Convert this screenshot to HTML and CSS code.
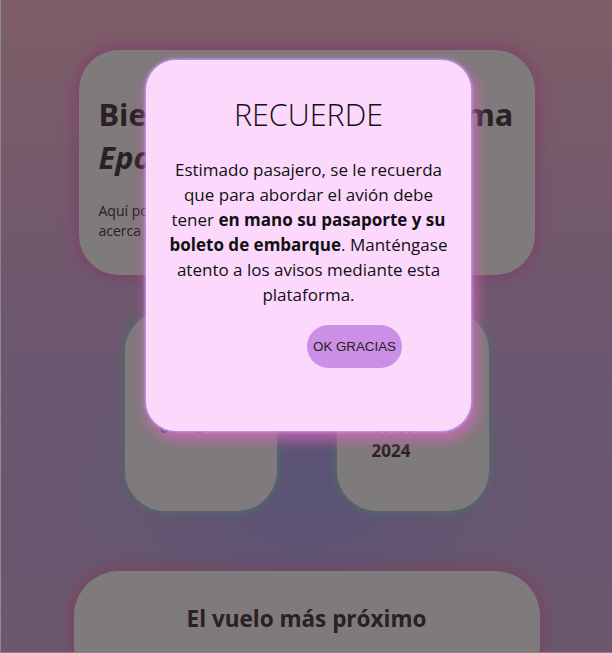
FILE: index.html
```html
<!DOCTYPE html>
<html lang="es">
<head>
<meta charset="utf-8">
<title>Epocha</title>
<link rel="stylesheet" href="styles.css">
</head>
<body>
<div class="page">
  <main class="content">
    <section class="card hero">
      <h1>Bienvenido a la plataforma<br><em>Epocha</em></h1>
      <p>Aquí podrás revisar la información<br>acerca de tus vuelos.</p>
    </section>
    <div class="stats">
      <div class="mini">
        <span class="label">Hora</span>
        <span class="val">06:12</span>
      </div>
      <div class="mini">
        <span class="label">Fecha</span>
        <span class="val">10-07</span>
        <span class="year">2024</span>
      </div>
    </div>
    <section class="card next">
      <h2>El vuelo más próximo</h2>
    </section>
  </main>
  <div class="overlay">
    <div class="modal">
      <h2 class="modal-title">RECUERDE</h2>
      <p class="modal-text">Estimado pasajero, se le recuerda que para abordar el avión debe tener <strong>en mano su pasaporte y su boleto de embarque</strong>. Manténgase atento a los avisos mediante esta plataforma.</p>
      <div class="actions"><button class="ok">OK GRACIAS</button></div>
    </div>
  </div>
</div>
</body>
</html>
```

FILE: styles.css
```css
html, body {
  margin: 0;
  padding: 0;
  height: 100%;
  overflow: hidden;
}
body {
  font-family: "Open Sans", "Noto Sans", sans-serif;
  background: #8a8a8a;
}
.page {
  position: relative;
  height: 652px;
  margin-left: 1px;
  overflow: hidden;
  background:
    radial-gradient(ellipse 42% 30% at 50% 74%, rgba(178,166,236,0.95), rgba(178,166,236,0) 100%),
    linear-gradient(180deg, #fcbccf 0%, #e4b2d8 35%, #d4aee0 60%, #d6b0de 100%);
}
.content {
  display: flex;
  flex-direction: column;
  align-items: center;
  padding-top: 50px;
}
.card {
  background: #fef4f6;
  box-sizing: border-box;
}
.hero {
  width: 456px;
  border-radius: 40px;
  padding: 43px 20px 34px;
  box-shadow: 0 0 14px 5px rgba(255, 110, 210, 0.55);
  color: #54404a;
}
.hero h1 {
  margin: 0;
  font-size: 30.7px;
  line-height: 43px;
  font-weight: 700;
  white-space: nowrap;
}
.hero p {
  margin: 22px 0 0;
  font-size: 14px;
  line-height: 20px;
}
.stats {
  display: flex;
  gap: 60px;
  margin-top: 36px;
}
.mini {
  width: 152px;
  height: 200px;
  box-sizing: border-box;
  background: #fef4f6;
  border-radius: 40px;
  padding: 70px 35px 0;
  display: flex;
  flex-direction: column;
  box-shadow: 0 0 6px 2px rgba(150, 225, 205, 0.8);
  color: #54404a;
}
.mini .label {
  font-size: 14px;
  line-height: 20px;
}
.mini .val {
  margin-top: 14px;
  font-size: 17px;
  font-weight: 700;
  line-height: 24px;
  color: #7a5a70;
}
.mini .year {
  font-size: 17px;
  font-weight: 700;
  line-height: 24px;
}
.next {
  width: 466px;
  height: 120px;
  margin-top: 60px;
  border-radius: 45px;
  padding: 33px 20px 0;
  box-shadow: 0 0 14px 5px rgba(255, 120, 170, 0.55);
  color: #54404a;
  text-align: center;
}
.next h2 {
  margin: 0;
  font-size: 22.5px;
  font-weight: 700;
  line-height: 29px;
}
.overlay {
  position: absolute;
  inset: 0;
  background: rgba(0, 0, 0, 0.5);
}
.modal {
  position: absolute;
  top: 60px;
  left: 145px;
  width: 325px;
  height: 371px;
  box-sizing: border-box;
  padding: 36px 16px 0;
  background: #fdd8fd;
  border-radius: 30px;
  text-align: center;
  color: #111;
  box-shadow: 0 0 3px 1px #b8a8ff, 3px 6px 14px 3px rgba(220, 100, 190, 0.75);
}
.modal-title {
  margin: 0;
  font-size: 30.5px;
  font-weight: 300;
  line-height: 36px;
}
.modal-text {
  margin: 25px 0 0;
  font-size: 17px;
  line-height: 25px;
  font-weight: 400;
}
.modal-text strong {
  font-weight: 700;
}
.actions {
  margin-top: 18px;
  padding-left: 145px;
  display: flex;
}
.ok {
  width: 95px;
  height: 43px;
  border: none;
  border-radius: 22px;
  background: #cc8fe6;
  color: #222;
  font-family: "Liberation Sans", Arial, sans-serif;
  font-size: 13.33px;
  padding: 0;
}
```
